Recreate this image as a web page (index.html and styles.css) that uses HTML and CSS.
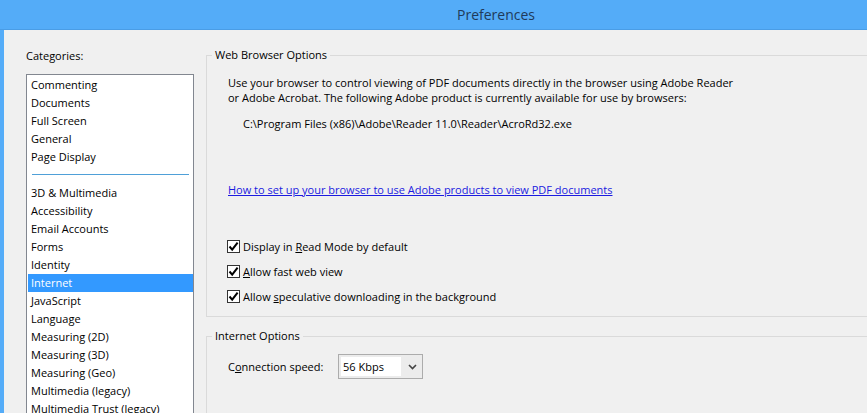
FILE: index.html
```html
<!DOCTYPE html>
<html>
<head>
<meta charset="utf-8">
<title>Preferences</title>
<link rel="stylesheet" href="styles.css">
</head>
<body>
<div class="titlebar">Preferences</div>
<div class="window">
  <div class="sidebar">
    <div class="cat-label">Categories:</div>
    <ul class="listbox">
      <li>Commenting</li>
      <li>Documents</li>
      <li>Full Screen</li>
      <li>General</li>
      <li>Page Display</li>
      <li class="sep"></li>
      <li>3D &amp; Multimedia</li>
      <li>Accessibility</li>
      <li>Email Accounts</li>
      <li>Forms</li>
      <li>Identity</li>
      <li class="selected">Internet</li>
      <li>JavaScript</li>
      <li>Language</li>
      <li>Measuring (2D)</li>
      <li>Measuring (3D)</li>
      <li>Measuring (Geo)</li>
      <li>Multimedia (legacy)</li>
      <li>Multimedia Trust (legacy)</li>
    </ul>
  </div>
  <div class="main">
    <fieldset class="group group-web">
      <legend>Web Browser Options</legend>
      <p class="desc">Use your browser to control viewing of PDF documents directly in the browser using Adobe Reader<br>or Adobe Acrobat. The following Adobe product is currently available for use by browsers:</p>
      <p class="path">C:\Program Files (x86)\Adobe\Reader 11.0\Reader\AcroRd32.exe</p>
      <a class="link" href="#">How to set up your browser to use Adobe products to view PDF documents</a>
      <div class="checks">
        <label class="check"><span class="box"><svg width="11" height="11" viewBox="0 0 11 11"><path d="M1.5 5.5 L4.2 8.6 L9.6 1.6" fill="none" stroke="#000" stroke-width="2"/></svg></span><span class="check-text">Display in <u>R</u>ead Mode by default</span></label>
        <label class="check"><span class="box"><svg width="11" height="11" viewBox="0 0 11 11"><path d="M1.5 5.5 L4.2 8.6 L9.6 1.6" fill="none" stroke="#000" stroke-width="2"/></svg></span><span class="check-text"><u>A</u>llow fast web view</span></label>
        <label class="check"><span class="box"><svg width="11" height="11" viewBox="0 0 11 11"><path d="M1.5 5.5 L4.2 8.6 L9.6 1.6" fill="none" stroke="#000" stroke-width="2"/></svg></span><span class="check-text">Allow <u>s</u>peculative downloading in the background</span></label>
      </div>
    </fieldset>
    <fieldset class="group group-net">
      <legend>Internet Options</legend>
      <div class="speed-row">
        <span class="speed-label">C<u>o</u>nnection speed:</span>
        <div class="select">
          <span class="select-value">56 Kbps</span>
          <span class="select-arrow"><svg width="9" height="6" viewBox="0 0 9 6"><path d="M1 1 L4.5 4.5 L8 1" fill="none" stroke="#444" stroke-width="1.6"/></svg></span>
        </div>
      </div>
    </fieldset>
  </div>
</div>
</body>
</html>
```

FILE: styles.css
```css
html, body {
  margin: 0;
  padding: 0;
}
body {
  width: 867px;
  height: 413px;
  overflow: hidden;
  background: #54acf8;
  font-family: "Open Sans", "Noto Sans", sans-serif;
  font-size: 11px;
  color: #000;
}
.titlebar {
  height: 30px;
  box-sizing: border-box;
  border-bottom: 1px solid #4a9de6;
  display: flex;
  align-items: center;
  justify-content: center;
  padding-left: 125px;
  font-size: 14px;
  color: #1f3a5a;
}
.window {
  margin-left: 4px;
  height: 383px;
  background: #f0f0f0;
  display: flex;
  padding-left: 22px;
  overflow: hidden;
}
.sidebar {
  width: 168px;
  flex: none;
  padding-top: 19px;
}
.cat-label {
  line-height: 14px;
  margin-bottom: 11px;
}
.listbox {
  list-style: none;
  margin: 0;
  padding: 1px 0 0 1px;
  border: 1px solid #828790;
  background: #fff;
  height: 420px;
}
.listbox li {
  height: 18px;
  line-height: 18px;
  padding-left: 3px;
  white-space: nowrap;
}
.listbox li.sep {
  position: relative;
}
.listbox li.sep::after {
  content: "";
  position: absolute;
  left: 4px;
  right: 4px;
  top: 8px;
  height: 1px;
  background: #4fa0d8;
}
.listbox li.selected {
  background: #3399ff;
  color: #fff;
}
.main {
  flex: 1;
  min-width: 0;
  margin-left: 12px;
  margin-right: -30px;
  padding-top: 18px;
}
.group {
  margin: 0;
  border: 1px solid #dadada;
  padding: 0 0 0 21px;
}
.group legend {
  padding: 0 3px;
  line-height: 14px;
  margin-left: -16px;
}
.group-web {
  padding-bottom: 7px;
}
.desc {
  margin: 13px 0 0 0;
  line-height: 15px;
}
.path {
  margin: 11px 0 0 15px;
  line-height: 15px;
}
.link {
  display: inline-block;
  margin-top: 51px;
  line-height: 15px;
  color: #1b1be0;
  text-decoration: underline;
}
.checks {
  margin-top: 37px;
  margin-left: -1px;
  display: flex;
  flex-direction: column;
}
.check {
  height: 25px;
  display: flex;
  align-items: center;
  white-space: nowrap;
}
.box {
  width: 11px;
  height: 11px;
  border: 1px solid #333;
  background: #fff;
  margin-right: 3px;
  display: flex;
}
.group-net {
  margin-top: 12px;
  height: 120px;
}
.speed-row {
  margin-top: 11px;
  display: flex;
  align-items: center;
}
.speed-label {
  width: 110px;
}
.select {
  width: 83px;
  height: 23px;
  border: 1px solid #acacac;
  background: #ececec;
  display: flex;
  align-items: center;
}
.select-value {
  margin-left: 2px;
  width: 60px;
  height: 19px;
  line-height: 19px;
  background: #fff;
  padding-left: 2px;
  box-sizing: border-box;
}
.select-arrow {
  flex: 1;
  display: flex;
  justify-content: center;
  padding-left: 2px;
}
```
